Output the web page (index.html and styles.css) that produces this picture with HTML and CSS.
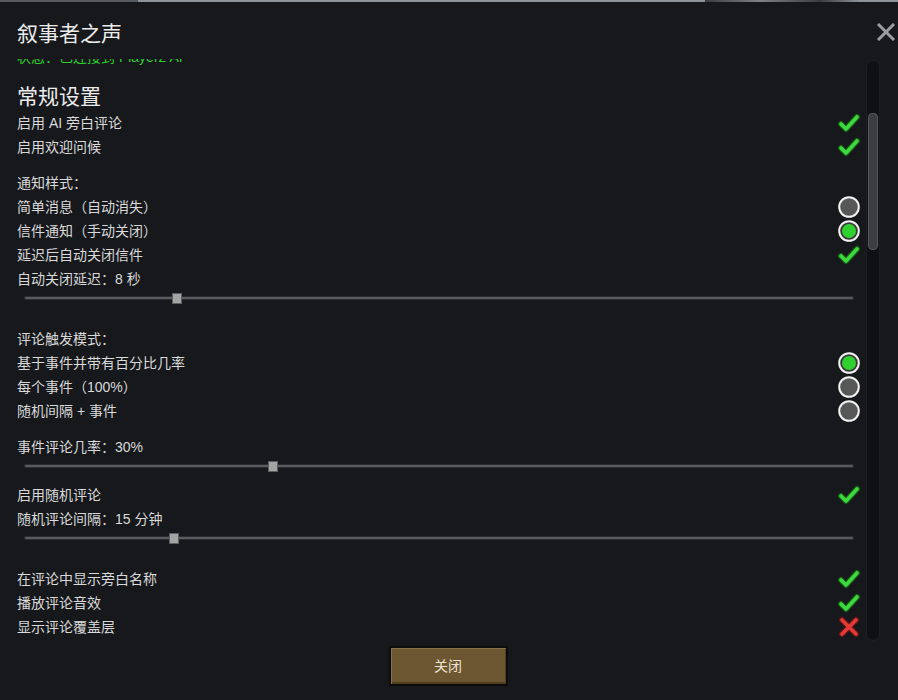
FILE: index.html
```html
<!DOCTYPE html>
<html lang="zh-CN">
<head>
<meta charset="utf-8">
<title>叙事者之声</title>
<link rel="stylesheet" href="styles.css">
</head>
<body>
<div class="topline"></div>
<div class="window">
  <button class="close-x" aria-label="关闭">
    <svg width="18" height="18" viewBox="0 0 18 18"><path d="M2 2 L16 16 M16 2 L2 16" stroke="#9c9c9c" stroke-width="3" stroke-linecap="square"/></svg>
  </button>
  <h1 class="title">叙事者之声</h1>
  <div class="scroll-area">
    <div class="scroll-view">
      <div class="content">
        <div class="status">状态：已连接到 Player2 AI</div>
        <h2 class="section">常规设置</h2>
        <div class="row"><span>启用 AI 旁白评论</span><svg class="ico" width="22" height="20" viewBox="0 0 22 20"><path class="ck-o" d="M3 11 L8 16 L19 4"/><path class="ck-i" d="M3 11 L8 16 L19 4"/></svg></div>
        <div class="row"><span>启用欢迎问候</span><svg class="ico" width="22" height="20" viewBox="0 0 22 20"><path class="ck-o" d="M3 11 L8 16 L19 4"/><path class="ck-i" d="M3 11 L8 16 L19 4"/></svg></div>

        <div class="row label gap">通知样式：</div>
        <div class="row"><span>简单消息（自动消失）</span><svg class="ico" width="22" height="22" viewBox="0 0 22 22"><circle cx="11" cy="11" r="9.8" fill="#575757" stroke="#f2f2f2" stroke-width="2"/></svg></div>
        <div class="row"><span>信件通知（手动关闭）</span><svg class="ico" width="22" height="22" viewBox="0 0 22 22"><circle cx="11" cy="11" r="9.8" fill="#3a3a3a" stroke="#f2f2f2" stroke-width="2"/><circle cx="11" cy="11" r="7" fill="#2fd12f"/></svg></div>
        <div class="row"><span>延迟后自动关闭信件</span><svg class="ico" width="22" height="20" viewBox="0 0 22 20"><path class="ck-o" d="M3 11 L8 16 L19 4"/><path class="ck-i" d="M3 11 L8 16 L19 4"/></svg></div>
        <div class="row"><span>自动关闭延迟：8 秒</span></div>
        <div class="slider"><div class="track"></div><div class="handle" style="left:18.4%"></div></div>

        <div class="row label gap-lg">评论触发模式：</div>
        <div class="row"><span>基于事件并带有百分比几率</span><svg class="ico" width="22" height="22" viewBox="0 0 22 22"><circle cx="11" cy="11" r="9.8" fill="#3a3a3a" stroke="#f2f2f2" stroke-width="2"/><circle cx="11" cy="11" r="7" fill="#2fd12f"/></svg></div>
        <div class="row"><span>每个事件（100%）</span><svg class="ico" width="22" height="22" viewBox="0 0 22 22"><circle cx="11" cy="11" r="9.8" fill="#575757" stroke="#f2f2f2" stroke-width="2"/></svg></div>
        <div class="row"><span>随机间隔 + 事件</span><svg class="ico" width="22" height="22" viewBox="0 0 22 22"><circle cx="11" cy="11" r="9.8" fill="#575757" stroke="#f2f2f2" stroke-width="2"/></svg></div>

        <div class="row gap"><span>事件评论几率：30%</span></div>
        <div class="slider"><div class="track"></div><div class="handle" style="left:30%"></div></div>

        <div class="row gap-sm"><span>启用随机评论</span><svg class="ico" width="22" height="20" viewBox="0 0 22 20"><path class="ck-o" d="M3 11 L8 16 L19 4"/><path class="ck-i" d="M3 11 L8 16 L19 4"/></svg></div>
        <div class="row"><span>随机评论间隔：15 分钟</span></div>
        <div class="slider"><div class="track"></div><div class="handle" style="left:18.1%"></div></div>

        <div class="row gap-lg"><span>在评论中显示旁白名称</span><svg class="ico" width="22" height="20" viewBox="0 0 22 20"><path class="ck-o" d="M3 11 L8 16 L19 4"/><path class="ck-i" d="M3 11 L8 16 L19 4"/></svg></div>
        <div class="row"><span>播放评论音效</span><svg class="ico" width="22" height="20" viewBox="0 0 22 20"><path class="ck-o" d="M3 11 L8 16 L19 4"/><path class="ck-i" d="M3 11 L8 16 L19 4"/></svg></div>
        <div class="row"><span>显示评论覆盖层</span><svg class="ico" width="22" height="22" viewBox="0 0 22 22"><path class="x-o" d="M4 4 L18 18 M18 4 L4 18"/><path class="x-i" d="M4 4 L18 18 M18 4 L4 18"/></svg></div>
      </div>
    </div>
    <div class="scrollbar"><div class="thumb"></div></div>
  </div>
  <div class="footer"><button class="btn">关闭</button></div>
</div>
</body>
</html>
```

FILE: styles.css
```css
* { box-sizing: border-box; }
html, body {
  margin: 0;
  padding: 0;
  width: 898px;
  height: 700px;
  overflow: hidden;
  background: #16181c;
  font-family: "Liberation Sans", "Noto Sans CJK SC", sans-serif;
  color: #dcdcdc;
}
.topline {
  height: 2px;
  background: linear-gradient(to right, #55585c 0, #55585c 138px, #8d9399 138px, #8d9399 705px, #3a3c40 705px, #7d8186 760px, #3a3c40 820px, #8d9399 860px);
}
.window {
  position: relative;
  padding: 0 18px 0 17px;
}
.close-x {
  position: absolute;
  top: 3px;
  right: 3px;
  width: 18px;
  height: 18px;
  padding: 0;
  border: 0;
  background: none;
  display: block;
}
.close-x svg { display: block; }
.title {
  margin: 18px 0 0;
  font-size: 21px;
  line-height: 28px;
  font-weight: normal;
  color: #ececec;
}
.scroll-area {
  margin-top: 11px;
  height: 583px;
  display: flex;
}
.scroll-view {
  flex: 1;
  height: 583px;
  overflow: hidden;
}
.content {
  margin-top: -14px;
  padding-right: 2px;
}
.status {
  line-height: 24px;
  font-size: 14px;
  color: #2ccf2c;
}
.section {
  margin: 14px 0 0;
  font-size: 21px;
  line-height: 28px;
  font-weight: normal;
  color: #ececec;
}
.row {
  height: 24px;
  line-height: 24px;
  font-size: 14px;
  display: flex;
  align-items: center;
  justify-content: space-between;
  color: #dadada;
}
.row span { white-space: nowrap; }
.gap { margin-top: 12px; }
.gap-sm { margin-top: 10px; }
.gap-lg { margin-top: 22px; }
.ico { display: block; flex: none; }
.ck-o { fill: none; stroke: #176017; stroke-width: 6; stroke-linecap: round; stroke-linejoin: round; }
.ck-i { fill: none; stroke: #3fd83f; stroke-width: 3.6; stroke-linecap: round; stroke-linejoin: round; }
.x-o { fill: none; stroke: #6a1414; stroke-width: 6; stroke-linecap: round; }
.x-i { fill: none; stroke: #e23a36; stroke-width: 3.6; stroke-linecap: round; }
.slider {
  position: relative;
  height: 14px;
  margin: 0 6px 0 7px;
  display: flex;
  align-items: center;
}
.track {
  width: 100%;
  height: 4px;
  border-radius: 2px;
  background: #595b5e;
  border: 1px solid #2a2c2f;
}
.handle {
  position: absolute;
  top: 2px;
  width: 10px;
  height: 11px;
  margin-left: -5px;
  background: #a3a3a3;
  border: 1px solid #5e5e5e;
}
.scrollbar {
  flex: none;
  width: 14px;
  margin: 1px 0 0 4px;
  height: 581px;
  border-radius: 7px;
  background: #0e1012;
  border: 1px solid #1c1e21;
  padding: 0 1px;
}
.thumb {
  margin-top: 52px;
  height: 137px;
  border-radius: 4px;
  background: #3a3d41;
  border: 1px solid #55585c;
}
.footer {
  display: flex;
  justify-content: center;
  padding-top: 4px;
  padding-right: 1px;
}
.btn {
  width: 119px;
  height: 40px;
  padding: 0;
  border: 2px solid #0c0c0c;
  background: #6d5732;
  box-shadow: inset 1px 1px 0 #8a7148, inset -1px -2px 0 #4f3f1f;
  color: #ebe2cf;
  font-family: "Liberation Sans", "Noto Sans CJK SC", sans-serif;
  font-size: 14px;
  line-height: 36px;
}
```
